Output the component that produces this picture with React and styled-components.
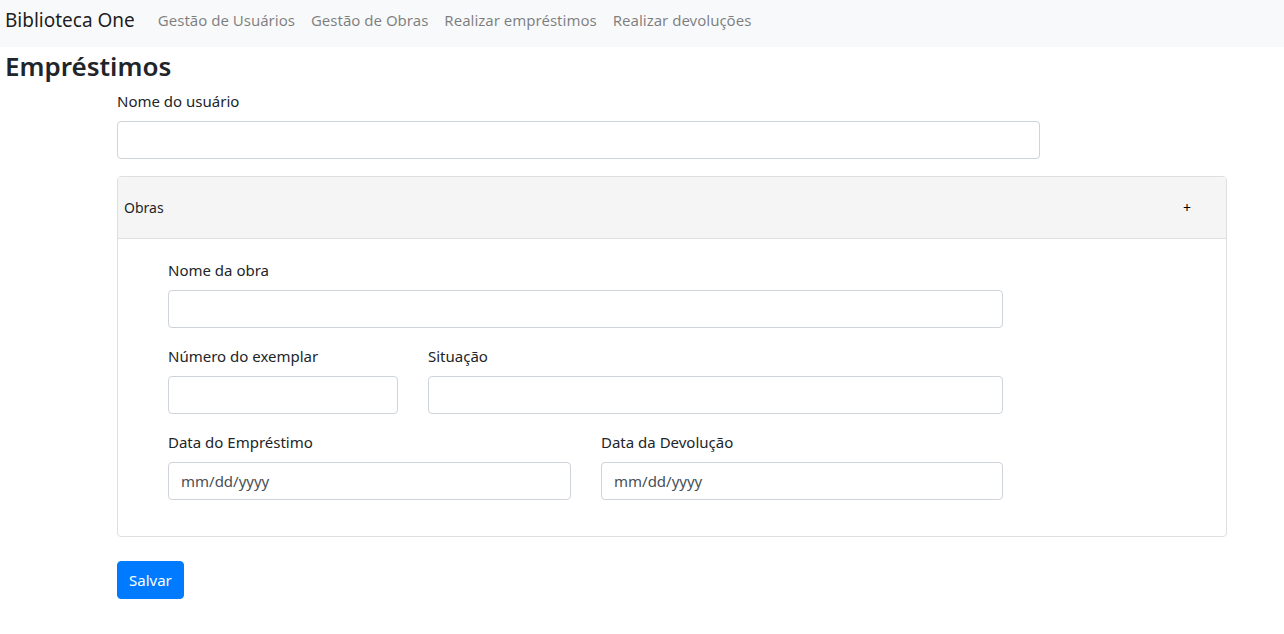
import styled, { createGlobalStyle } from 'styled-components';

const GlobalStyle = createGlobalStyle`
    * {
        box-sizing: border-box;
    }
    body {
        margin: 0;
        background: #fff;
        color: #212529;
        font-family: "Noto Sans", "Open Sans", sans-serif;
        font-size: 15px;
        line-height: 1.5;
    }
`;

const links = ['Gestão de Usuários', 'Gestão de Obras', 'Realizar empréstimos', 'Realizar devoluções'];

const App = () => {
    return (
        <>
            <GlobalStyle />
            <Navbar>
                <Brand href="#">Biblioteca One</Brand>
                <NavList>
                    {links.map((l) => (
                        <NavLink key={l} href="#">{l}</NavLink>
                    ))}
                </NavList>
            </Navbar>
            <Title>Empréstimos</Title>
            <Form onSubmit={(e) => e.preventDefault()}>
                <Group $width="923px">
                    <Label>Nome do usuário</Label>
                    <Input type="text" />
                </Group>
                <Card>
                    <CardHeader>
                        <span>Obras</span>
                        <Toggle>+</Toggle>
                    </CardHeader>
                    <CardBody>
                        <Group $width="835px">
                            <Label>Nome da obra</Label>
                            <Input type="text" />
                        </Group>
                        <Row>
                            <Group $width="230px">
                                <Label>Número do exemplar</Label>
                                <Input type="text" />
                            </Group>
                            <Group $width="575px">
                                <Label>Situação</Label>
                                <Input type="text" />
                            </Group>
                        </Row>
                        <Row>
                            <Group $width="403px">
                                <Label>Data do Empréstimo</Label>
                                <Input type="text" placeholder="mm/dd/yyyy" />
                            </Group>
                            <Group $width="402px">
                                <Label>Data da Devolução</Label>
                                <Input type="text" placeholder="mm/dd/yyyy" />
                            </Group>
                        </Row>
                    </CardBody>
                </Card>
                <SaveBtn type="submit">Salvar</SaveBtn>
            </Form>
        </>
    );
};

export default App;

const Navbar = styled.nav`
    height: 47px;
    display: flex;
    align-items: center;
    padding: 0 5px 6px;
    background-color: #f8f9fa;
`;

const Brand = styled.a`
    font-size: 19px;
    color: rgba(0, 0, 0, 0.9);
    text-decoration: none;
    margin-right: 15px;
`;

const NavList = styled.div`
    display: flex;
`;

const NavLink = styled.a`
    padding: 0 8px;
    font-size: 15px;
    color: rgba(0, 0, 0, 0.5);
    text-decoration: none;
`;

const Title = styled.h2`
    margin: 1px 0 5px 5px;
    font-size: 26px;
    font-weight: 600;
    line-height: 1.4;
`;

const Form = styled.form`
    padding-left: 117px;
    width: 1227px;
`;

const Group = styled.div`
    width: ${(p) => p.$width};
    margin-bottom: 16px;
`;

const Label = styled.label`
    display: block;
    margin-bottom: 8px;
    font-size: 15px;
    line-height: 24px;
`;

const Input = styled.input`
    display: block;
    width: 100%;
    height: 38px;
    padding: 6px 12px;
    font-family: inherit;
    font-size: 15px;
    color: #495057;
    border: 1px solid #ced4da;
    border-radius: 4px;
    outline: none;
    &::placeholder {
        color: #495057;
    }
`;

const Card = styled.div`
    margin-top: 17px;
    border: 1px solid #dfdfdf;
    border-radius: 4px;
`;

const CardHeader = styled.div`
    height: 62px;
    display: flex;
    align-items: center;
    justify-content: space-between;
    padding: 0 35px 0 6px;
    font-size: 14px;
    background-color: #f5f5f5;
    border-bottom: 1px solid #dfdfdf;
`;

const Toggle = styled.span`
    font-size: 14px;
    color: #000;
`;

const CardBody = styled.div`
    padding: 19px 50px 20px;
`;

const Row = styled.div`
    display: flex;
    gap: 30px;
`;

const SaveBtn = styled.button`
    margin-top: 24px;
    height: 38px;
    padding: 0 11px;
    font-family: inherit;
    font-size: 15px;
    color: #fff;
    background-color: #007bff;
    border: 1px solid #007bff;
    border-radius: 4px;
`;
